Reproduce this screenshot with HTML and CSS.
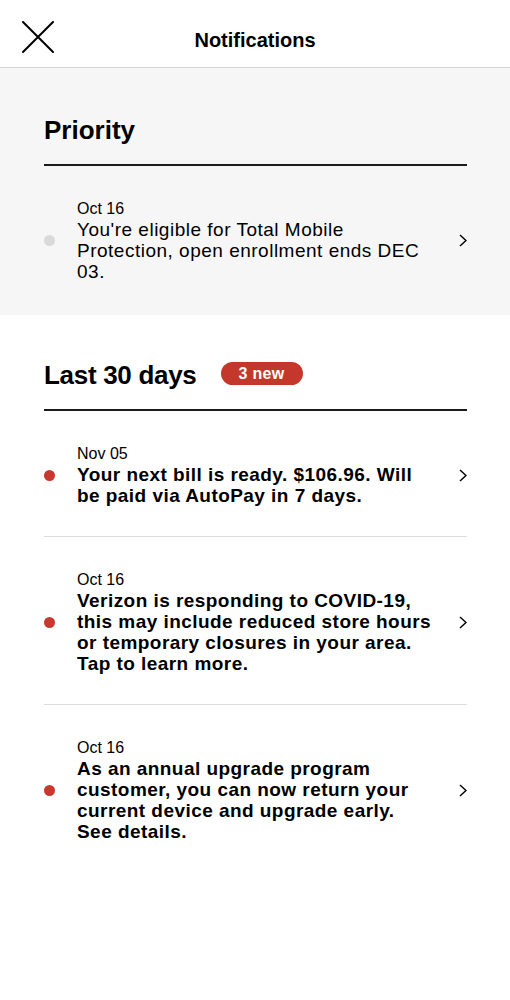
FILE: index.html
```html
<!DOCTYPE html>
<html lang="en">
<head>
<meta charset="utf-8">
<title>Notifications</title>
<link rel="stylesheet" href="styles.css">
</head>
<body>
<header class="topbar">
  <button class="close" aria-label="Close">
    <svg width="32" height="32" viewBox="0 0 32 32"><path d="M1 1 L31 31 M31 1 L1 31" stroke="#000" stroke-width="2" fill="none" stroke-linecap="round"/></svg>
  </button>
  <h1 class="title">Notifications</h1>
  <span></span>
</header>

<section class="section priority">
  <div class="section-head">
    <h2 class="heading">Priority</h2>
  </div>
  <ul class="list">
    <li class="item">
      <span class="dot dot-read"></span>
      <div class="text">
        <div class="date">Oct 16</div>
        <div class="body">You're eligible for Total Mobile Protection, open enrollment ends DEC 03.</div>
      </div>
      <svg class="chev" width="8" height="13" viewBox="0 0 8 13"><polyline points="1,1 7,6.5 1,12" fill="none" stroke="#000" stroke-width="1.5"/></svg>
    </li>
  </ul>
</section>

<section class="section recent">
  <div class="section-head">
    <h2 class="heading heading-tight">Last 30 days</h2>
    <span class="badge">3 new</span>
  </div>
  <ul class="list">
    <li class="item">
      <span class="dot"></span>
      <div class="text">
        <div class="date">Nov 05</div>
        <div class="body bold">Your next bill is ready. $106.96. Will be paid via AutoPay in 7 days.</div>
      </div>
      <svg class="chev" width="8" height="13" viewBox="0 0 8 13"><polyline points="1,1 7,6.5 1,12" fill="none" stroke="#000" stroke-width="1.5"/></svg>
    </li>
    <li class="item">
      <span class="dot"></span>
      <div class="text">
        <div class="date">Oct 16</div>
        <div class="body bold">Verizon is responding to COVID-19, this may include reduced store hours or temporary closures in your area. Tap to learn more.</div>
      </div>
      <svg class="chev" width="8" height="13" viewBox="0 0 8 13"><polyline points="1,1 7,6.5 1,12" fill="none" stroke="#000" stroke-width="1.5"/></svg>
    </li>
    <li class="item">
      <span class="dot"></span>
      <div class="text">
        <div class="date">Oct 16</div>
        <div class="body bold">As an annual upgrade program customer, you can now return your current device and upgrade early. See details.</div>
      </div>
      <svg class="chev" width="8" height="13" viewBox="0 0 8 13"><polyline points="1,1 7,6.5 1,12" fill="none" stroke="#000" stroke-width="1.5"/></svg>
    </li>
  </ul>
</section>
</body>
</html>
```
FILE: styles.css
```css
* { box-sizing: border-box; }
html, body { margin: 0; padding: 0; background: #fff; }
body {
  font-family: "Liberation Sans", Arial, Helvetica, sans-serif;
  color: #000;
  width: 510px;
}

.topbar {
  display: grid;
  grid-template-columns: 1fr auto 1fr;
  align-items: start;
  height: 68px;
  padding: 21px 0 0 22px;
  border-bottom: 1px solid #d6d6d6;
  background: #fff;
}
.close {
  justify-self: start;
  border: 0;
  background: none;
  padding: 0;
  width: 32px;
  height: 32px;
  display: block;
}
.close svg { display: block; }
.title {
  margin: 7px 0 0 -22px;
  font-size: 20px;
  line-height: 24px;
  font-weight: 700;
}

.section { padding: 47px 43px 0 44px; }
.priority { background: #f6f6f6; }
.recent { padding-top: 45px; }

.section-head {
  display: flex;
  align-items: center;
  gap: 24px;
  padding-bottom: 19px;
  border-bottom: 2px solid #1a1a1a;
}
.heading {
  margin: 0;
  font-size: 26px;
  line-height: 30px;
  font-weight: 700;
}
.heading-tight { letter-spacing: -0.3px; }

.badge {
  display: inline-block;
  height: 23px;
  line-height: 23px;
  margin-top: -3px;
  padding: 0 19px 0 18px;
  border-radius: 12px;
  background: #c4382c;
  color: #fff;
  font-size: 16px;
  font-weight: 700;
  letter-spacing: 0.3px;
}

.list { list-style: none; margin: 0; padding: 0; }
.item {
  display: flex;
  align-items: center;
  padding: 33px 0 30px;
  border-bottom: 1px solid #dcdcdc;
}
.item:last-child { border-bottom: 0; }
.priority .item { padding-bottom: 33px; }

.dot {
  flex: 0 0 11px;
  width: 11px;
  height: 11px;
  border-radius: 50%;
  background: #c8382e;
  margin-right: 22px;
}
.dot-read { background: #d9d9d9; }

.text { flex: 0 0 357px; }
.date {
  font-size: 16px;
  line-height: 20px;
}
.body {
  font-size: 19px;
  line-height: 21px;
  letter-spacing: 0.5px;
}
.bold { font-weight: 700; letter-spacing: 0.45px; }

.chev { margin-left: auto; display: block; }
```
